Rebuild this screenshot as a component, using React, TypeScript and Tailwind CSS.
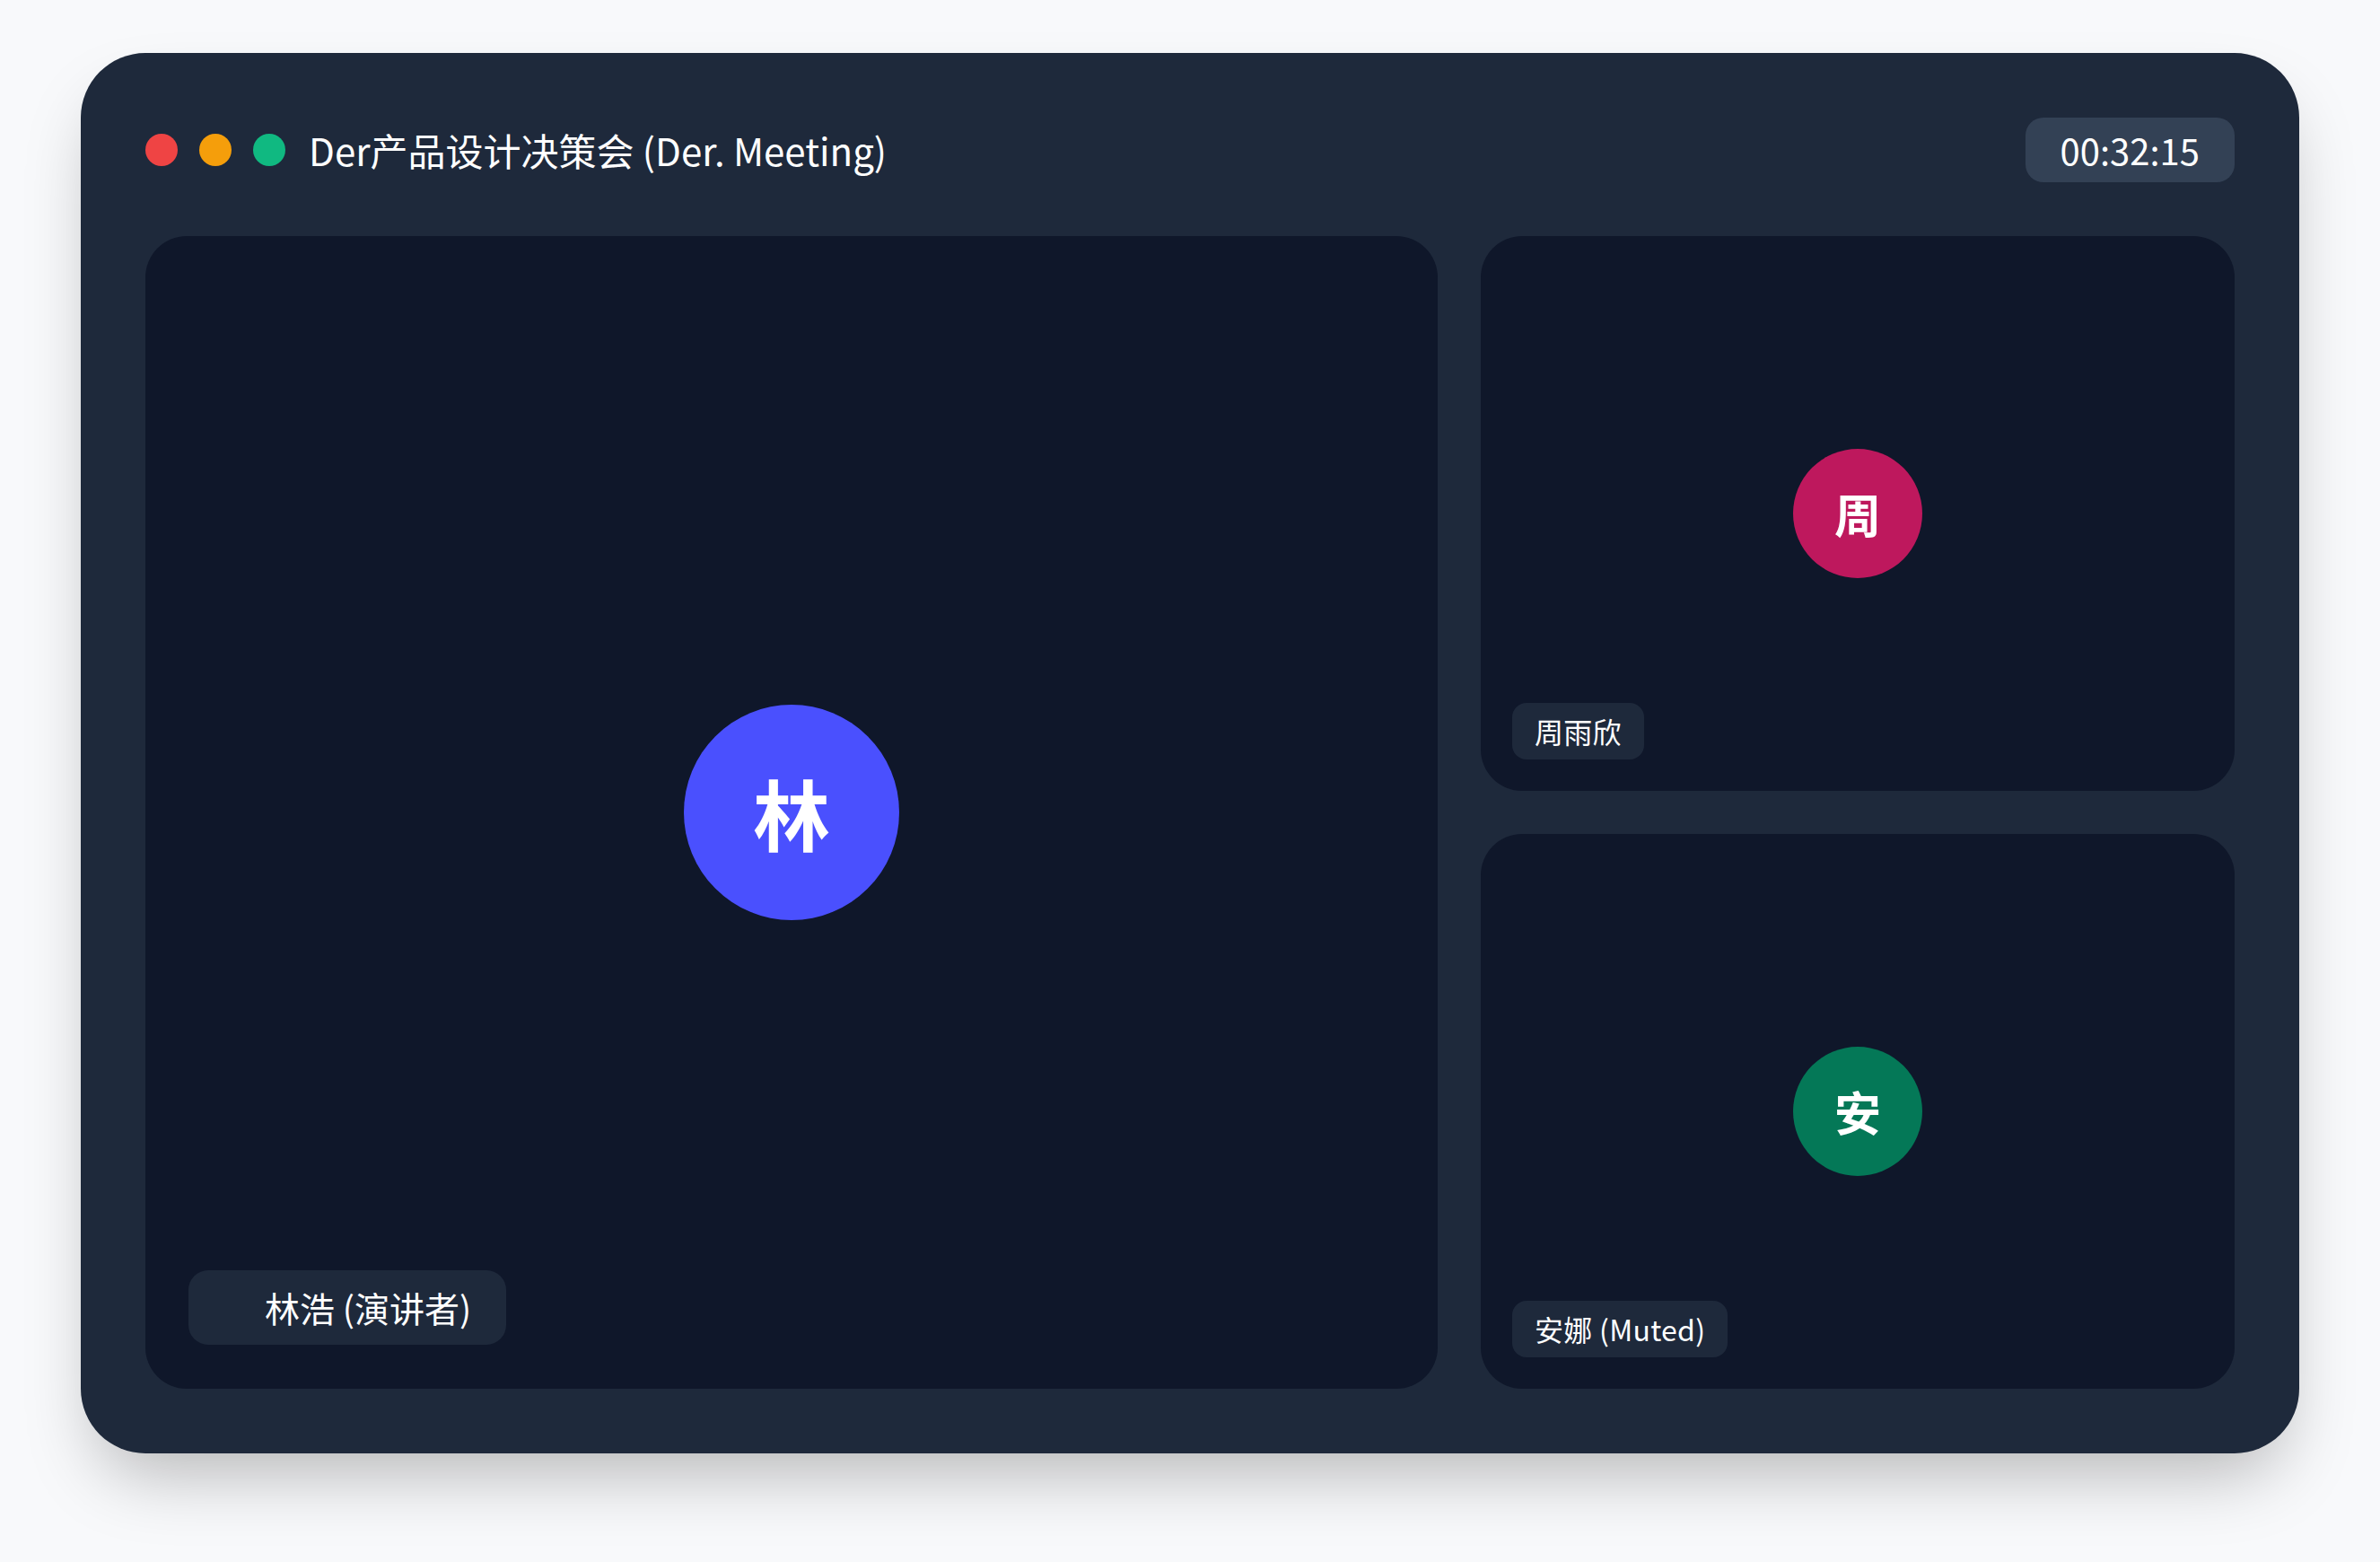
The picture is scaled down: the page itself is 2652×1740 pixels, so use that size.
import React from 'react';

const font = { fontFamily: '"Noto Sans CJK SC", "Noto Sans", sans-serif' };

type Tile = { initial: string; name: string; color: string };

const side: Tile[] = [
  { initial: '周', name: '周雨欣', color: 'bg-[#be185d]' },
  { initial: '安', name: '安娜 (Muted)', color: 'bg-[#047857]' },
];

function SideTile({ t }: { t: Tile }) {
  return (
    <div className="relative flex items-center justify-center rounded-[46px] bg-[#0f172a]">
      <div className={`flex h-[144px] w-[144px] items-center justify-center rounded-full ${t.color}`}>
        <span className="text-[52px] font-bold leading-none text-white">{t.initial}</span>
      </div>
      <div className="absolute bottom-[35px] left-[35px] rounded-[16px] bg-[#1e293b] px-[25px] py-[12px] text-[32px] leading-[39px] tracking-[0.3px] text-white">
        {t.name}
      </div>
    </div>
  );
}

export default function App() {
  return (
    <div className="min-h-[1740px] bg-[#f8f9fb] px-[90px] pt-[59px]" style={font}>
      <div className="rounded-[72px] bg-[#1e293b] p-[72px] shadow-[0_40px_80px_-20px_rgba(0,0,0,0.28)]">
        <div className="mb-[60px] flex h-[72px] items-center justify-between">
          <div className="flex items-center">
            <span className="h-[36px] w-[36px] rounded-full bg-[#ef4444]" />
            <span className="ml-[24px] h-[36px] w-[36px] rounded-full bg-[#f59e0b]" />
            <span className="ml-[24px] h-[36px] w-[36px] rounded-full bg-[#10b981]" />
            <h1 className="ml-[26px] text-[42px] font-normal leading-none text-white">
              Der产品设计决策会 (Der. Meeting)
            </h1>
          </div>
          <div className="flex h-[72px] items-center rounded-[20px] bg-[#334155] px-[39px] text-[40px] font-normal text-white">
            00:32:15
          </div>
        </div>

        <div className="grid h-[1284px] grid-cols-[12fr_7fr] gap-[48px]">
          <div className="relative flex items-center justify-center rounded-[46px] bg-[#0f172a]">
            <div className="flex h-[240px] w-[240px] items-center justify-center rounded-full bg-[#4a50fe]">
              <span className="text-[86px] font-bold leading-none text-white">林</span>
            </div>
            <div className="absolute bottom-[49px] left-[48px] flex items-center rounded-[22px] bg-[#1e293b] py-[18px] pl-[85px] pr-[39px] text-[39px] leading-[47px] text-white">
              林浩 (演讲者)
            </div>
          </div>
          <div className="grid grid-rows-2 gap-[48px]">
            {side.map(t => (
              <SideTile key={t.name} t={t} />
            ))}
          </div>
        </div>
      </div>
    </div>
  );
}
